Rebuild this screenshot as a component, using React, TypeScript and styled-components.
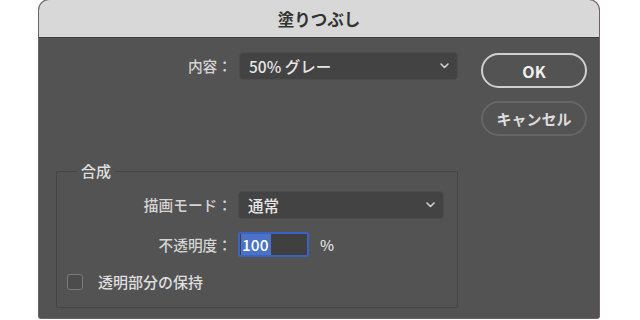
import styled, { createGlobalStyle } from "styled-components"

const GlobalStyle = createGlobalStyle`
  html, body {
    margin: 0;
    padding: 0;
    background: #ffffff;
  }
  body {
    font-family: "Noto Sans CJK JP", "Noto Sans", sans-serif;
  }
`

const Page = styled.div`
  width: 640px;
  height: 320px;
  padding-left: 39px;
  box-sizing: border-box;
  overflow: hidden;
`

const Dialog = styled.div`
  width: 560px;
  height: 318px;
  background: #535353;
  display: flex;
  flex-direction: column;
  overflow: hidden;
  border-radius: 10px 10px 2px 2px;
  box-shadow: 0 0 0 1px #6a6464;
`

const TitleBar = styled.div`
  height: 37px;
  flex: none;
  background: #d8d8d8;
  border-bottom: 1px solid #3e3e3e;
  display: flex;
  align-items: center;
  justify-content: center;
  font-size: 16.5px;
  font-weight: 700;
  color: #333333;
`

const Body = styled.div`
  flex: 1;
  display: flex;
  gap: 23px;
  padding: 14px 12px 0 17px;
`

const MainColumn = styled.div`
  width: 402px;
  display: flex;
  flex-direction: column;
`

const ButtonColumn = styled.div`
  display: flex;
  flex-direction: column;
  gap: 13px;
  padding-top: 1px;
`

const PillButton = styled.button<{ $primary?: boolean }>`
  width: 106px;
  height: 35px;
  border-radius: 18px;
  box-sizing: border-box;
  background: transparent;
  border: 2px solid ${(p) => (p.$primary ? "#cfcfcf" : "#666666")};
  color: ${(p) => (p.$primary ? "#f0f0f0" : "#dddddd")};
  font-family: inherit;
  font-size: ${(p) => (p.$primary ? "16px" : "15px")};
  font-weight: 700;
  padding: 0;
`

const Row = styled.div<{ $label: number; $top?: number; $gap?: number }>`
  display: grid;
  grid-template-columns: ${(p) => p.$label}px auto auto;
  justify-content: start;
  align-items: center;
  column-gap: ${(p) => p.$gap ?? 6}px;
  margin-top: ${(p) => p.$top ?? 0}px;
`

const Label = styled.span`
  text-align: right;
  font-size: 14.7px;
  line-height: 20px;
  color: #d4d4d4;
  font-weight: 500;
  white-space: nowrap;
`

const Select = styled.div<{ $width: number }>`
  width: ${(p) => p.$width}px;
  height: 28px;
  box-sizing: border-box;
  background: #434343;
  border: 1px solid #4d4d4d;
  border-radius: 4px;
  display: flex;
  align-items: center;
  justify-content: space-between;
  padding: 0 8px 0 9px;
  color: #e6e6e6;
  font-size: 15.5px;
  font-weight: 500;
`

const Chevron = () => (
  <svg width="9" height="6" viewBox="0 0 9 6">
    <polyline points="1,1 4.5,4.5 8,1" fill="none" stroke="#d0d0d0" strokeWidth="1.6" strokeLinecap="round" strokeLinejoin="round" />
  </svg>
)

const Group = styled.fieldset`
  margin: 82px 0 0 0;
  padding: 0 0 15px 0;
  border: 1px solid #454545;
  border-radius: 2px;
  min-width: 0;
`

const Legend = styled.legend`
  margin-left: 20px;
  padding: 0 4px;
  font-size: 15px;
  line-height: 18px;
  color: #dedede;
  font-weight: 500;
`

const NumberField = styled.div`
  width: 71px;
  height: 25px;
  box-sizing: border-box;
  border: 2px solid #3d63c2;
  border-radius: 2px;
  background: #404040;
  display: flex;
  align-items: center;
  padding-left: 1px;
`

const Selected = styled.span`
  background: #4b72c6;
  color: #ffffff;
  font-size: 15.5px;
  font-weight: 500;
  line-height: 21px;
  padding: 0 2px 0 1px;
`

const Unit = styled.span`
  margin-left: 5px;
  font-size: 15px;
  color: #dedede;
  font-weight: 500;
`

const CheckRow = styled.label`
  display: flex;
  align-items: center;
  gap: 15px;
  margin: 15px 0 0 10px;
  font-size: 15px;
  line-height: 20px;
  color: #dedede;
  font-weight: 500;
`

const Checkbox = styled.span`
  width: 16px;
  height: 16px;
  box-sizing: border-box;
  border: 1.5px solid #7a7a7a;
  border-radius: 3px;
  background: #4c4c4c;
`

export default function App() {
  return (
    <>
      <GlobalStyle />
      <Page>
        <Dialog>
          <TitleBar>塗りつぶし</TitleBar>
          <Body>
            <MainColumn>
              <Row $label={176} $gap={7}>
                <Label>内容：</Label>
                <Select $width={219}>
                  <span>50% グレー</span>
                  <Chevron />
                </Select>
              </Row>
              <Group>
                <Legend>合成</Legend>
                <Row $label={175} $top={11}>
                  <Label>描画モード：</Label>
                  <Select $width={206}>
                    <span>通常</span>
                    <Chevron />
                  </Select>
                </Row>
                <Row $label={175} $top={13}>
                  <Label>不透明度：</Label>
                  <NumberField>
                    <Selected>100</Selected>
                  </NumberField>
                  <Unit>%</Unit>
                </Row>
                <CheckRow>
                  <Checkbox />
                  透明部分の保持
                </CheckRow>
              </Group>
            </MainColumn>
            <ButtonColumn>
              <PillButton $primary>OK</PillButton>
              <PillButton>キャンセル</PillButton>
            </ButtonColumn>
          </Body>
        </Dialog>
      </Page>
    </>
  )
}
